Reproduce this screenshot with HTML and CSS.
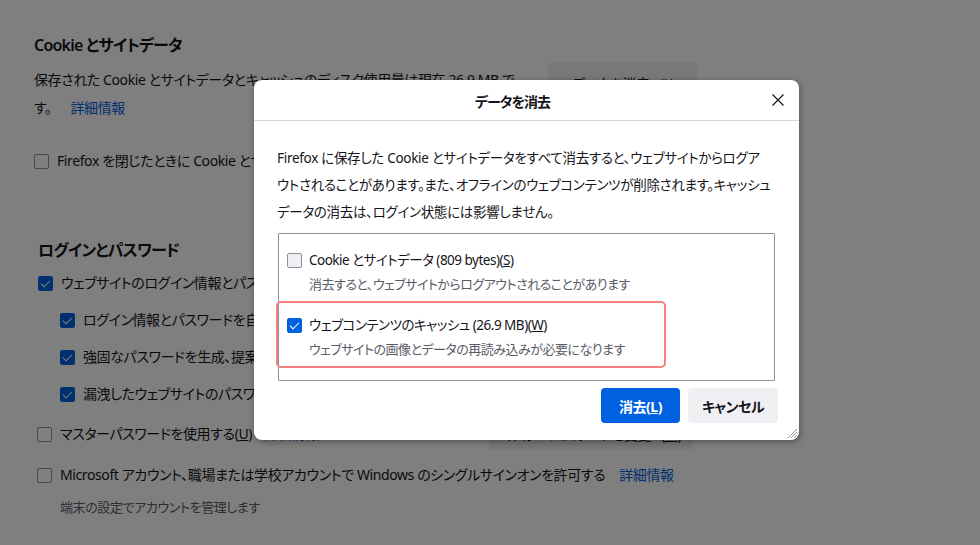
FILE: index.html
```html
<!DOCTYPE html>
<html lang="ja">
<head>
  <meta charset="utf-8">
  <title>設定 - プライバシーとセキュリティ</title>
  <link rel="stylesheet" href="styles.css">
</head>
<body>
  <div class="prefs">
    <section class="group">
      <h2 class="group-title">Cookie とサイトデータ</h2>
      <div class="split">
        <p class="desc">保存された Cookie とサイトデータとキャッシュのディスク使用量は現在 26.9 MB です。<a class="link" href="#">詳細情報</a></p>
        <button class="pref-btn clear-btn">データを消去...(L)</button>
      </div>
      <label class="check row-first"><span class="box"></span>Firefox を閉じたときに Cookie とサイトデータを削除する(C)</label>
    </section>

    <section class="group logins">
      <h2 class="group-title">ログインとパスワード</h2>
      <label class="check save-row"><span class="box on"></span>ウェブサイトのログイン情報とパスワードを保存する(R)</label>
      <label class="check sub"><span class="box on"></span>ログイン情報とパスワードを自動入力する(I)</label>
      <label class="check sub"><span class="box on"></span>強固なパスワードを生成、提案する(G)</label>
      <label class="check sub"><span class="box on"></span>漏洩したウェブサイトのパスワードの警告を表示する(B)</label>
      <div class="split master">
        <label class="check"><span class="box"></span>マスターパスワードを使用する(<u>U</u>)<a class="link" href="#">詳細情報</a></label>
        <button class="pref-btn change-btn">マスターパスワードを変更...(<u>M</u>)</button>
      </div>
      <label class="check sso-row"><span class="box"></span>Microsoft アカウント、職場または学校アカウントで Windows のシングルサインオンを許可する<a class="link" href="#">詳細情報</a></label>
      <p class="hint">端末の設定でアカウントを管理します</p>
    </section>
  </div>

  <div class="overlay">
    <div class="dialog">
      <div class="dialog-head">
        <div class="dialog-title">データを消去</div>
        <button class="close" aria-label="閉じる">
          <svg width="12" height="12" viewBox="0 0 12 12"><path d="M0.5 0.5 L11.5 11.5 M11.5 0.5 L0.5 11.5" stroke="#15141a" stroke-width="1.2" fill="none"/></svg>
        </button>
      </div>
      <div class="dialog-body">
        <p class="intro">Firefox に保存した Cookie とサイトデータをすべて消去すると、ウェブサイトからログア<br>ウトされることがあります。また、オフラインのウェブコンテンツが削除されます。キャッシュ<br>データの消去は、ログイン状態には影響しません。</p>
        <div class="listbox">
          <div class="item">
            <label class="item-label"><span class="box"></span>Cookie とサイトデータ (809 bytes)(<u>S</u>)</label>
            <div class="item-desc">消去すると、ウェブサイトからログアウトされることがあります</div>
          </div>
          <div class="item focused">
            <label class="item-label"><span class="box on"></span>ウェブコンテンツのキャッシュ (26.9 MB)(<u>W</u>)</label>
            <div class="item-desc">ウェブサイトの画像とデータの再読み込みが必要になります</div>
          </div>
        </div>
        <div class="actions">
          <button class="btn primary">消去(<u>L</u>)</button>
          <button class="btn cancel">キャンセル</button>
        </div>
      </div>
      <svg class="grip" width="10" height="10" viewBox="0 0 10 10"><path d="M10 1 L1 10 M10 4 L4 10 M10 7 L7 10" stroke="#8f8f9d" stroke-width="1" fill="none"/></svg>
    </div>
  </div>
</body>
</html>
```
FILE: styles.css
```css
body {
  margin: 0;
  background-color: #fff;
  color: #15141a;
  font-family: "Noto Sans", "Noto Sans CJK JP", sans-serif;
  font-size: 14px;
  letter-spacing: -0.4px;
  font-feature-settings: "palt";
  height: 545px;
  overflow: hidden;
  position: relative;
}

.prefs {
  padding: 30px 0 0 34px;
}

.group-title {
  font-size: 16px;
  font-weight: 600;
  letter-spacing: -0.8px;
  margin: 0;
  line-height: 30px;
}

.split {
  display: flex;
  align-items: flex-start;
}

.desc {
  width: 484px;
  margin: 6px 0 0;
  line-height: 28px;
}

.link {
  color: #0061e0;
  text-decoration: none;
  margin-left: 14px;
}

.desc .link {
  margin-left: 19px;
}

.pref-btn {
  font: inherit;
  letter-spacing: inherit;
  font-feature-settings: "palt";
  background-color: #f0f0f4;
  color: #15141a;
  border: none;
  border-radius: 4px;
  padding: 0 16px;
  height: 40px;
  white-space: nowrap;
}

.clear-btn {
  margin: 3px 0 0 30px;
  width: 150px;
}

.check {
  display: flex;
  align-items: center;
  line-height: 22px;
  white-space: nowrap;
}

.box {
  width: 13px;
  height: 13px;
  border: 1px solid #8f8f9d;
  border-radius: 2px;
  background-color: #fff;
  margin-right: 8px;
  flex-shrink: 0;
  position: relative;
}

.box.on {
  background-color: #0061e0;
  border-color: #0061e0;
}

.box.on::after {
  content: "";
  position: absolute;
  left: 2px;
  top: 3px;
  width: 8px;
  height: 4px;
  border-left: 1.3px solid #fff;
  border-bottom: 1.3px solid #fff;
  transform: rotate(-45deg);
}

.row-first {
  margin-top: 28px;
}

.logins {
  margin-top: 63px;
  padding-left: 4px;
}

.save-row {
  margin-top: 7px;
}

.check.sub {
  margin: 15px 0 0 22px;
}

.master {
  margin-left: -1px;
  margin-top: 13px;
  height: 32px;
  align-items: center;
}

.master .check {
  width: 452px;
}

.master .link {
  margin-left: 12px;
}

.change-btn {
  height: 32px;
  width: 203px;
  padding: 0 12px;
  text-align: right;
}

.sso-row {
  margin: 14px 0 0 -1px;
}

.hint {
  margin: 10px 0 0 22px;
  font-size: 13px;
  color: #5b5b66;
  line-height: 22px;
}

/* modal */
.overlay {
  position: absolute;
  inset: 0;
  background-color: rgba(0, 0, 0, 0.5);
  padding: 80px 0 0 254px;
}

.dialog {
  position: relative;
  width: 545px;
  height: 360px;
  background-color: #fff;
  border-radius: 8px;
  box-shadow: 1px 2px 6px rgba(0, 0, 0, 0.35);
}

.dialog-head {
  display: flex;
  align-items: center;
  height: 40px;
  padding: 0 7px;
  border-bottom: 1px solid #d7d7db;
}

.dialog-title {
  flex: 1;
  text-align: center;
  font-size: 14px;
  font-weight: 700;
  letter-spacing: -1px;
  padding-top: 2px;
}

.close {
  width: 28px;
  height: 28px;
  border: none;
  background: none;
  padding: 0;
  display: flex;
  align-items: center;
  justify-content: center;
}

.dialog-body {
  padding: 24px 24px 0 23px;
}

.intro {
  margin: 0;
  line-height: 27px;
  font-size: 13.5px;
  letter-spacing: -0.3px;
  white-space: nowrap;
}

.listbox {
  margin: 7px 0 0 1px;
  height: 143px;
  border: 1px solid #8f8f9d;
  border-radius: 1px;
  padding: 3px 0 0;
}

.item {
  display: inline-block;
  padding: 12px 40px 7px 8px;
  border-radius: 4px;
}

.item.focused {
  outline: 2px solid #f47f7f;
  outline-offset: -1px;
  margin-left: -2px;
  padding-left: 10px;
}

.item-label {
  display: flex;
  align-items: center;
  line-height: 22px;
  font-size: 13.5px;
  letter-spacing: -0.5px;
}

.item-label .box {
  background-color: #f0f0f4;
  margin-right: 7px;
}

.item-label .box.on {
  background-color: #0061e0;
}

.item-desc {
  margin: 2px 0 0 22px;
  line-height: 22px;
  font-size: 13px;
  letter-spacing: -0.5px;
  color: #5b5b66;
}

.actions {
  display: flex;
  justify-content: flex-end;
  gap: 8px;
  margin: 7px -3px 0 0;
}

.btn {
  font: inherit;
  font-feature-settings: "palt";
  font-weight: 700;
  letter-spacing: -0.5px;
  height: 35px;
  padding: 0;
  border: none;
  border-radius: 4px;
  background-color: #f0f0f4;
  color: #15141a;
  width: 90px;
}

.btn.primary {
  background-color: #0061e0;
  color: #fff;
  width: 79px;
}

.grip {
  position: absolute;
  right: 2px;
  bottom: 2px;
}
```
